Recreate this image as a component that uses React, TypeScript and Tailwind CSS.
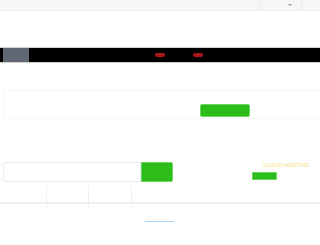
import React from "react";

export default function App() {
  return (
    <div className="w-[320px] h-[245px] bg-white overflow-hidden relative" style={{ fontFamily: '"Liberation Sans", Arial, sans-serif' }}>
      {/* top bar */}
      <div className="h-[11px] bg-[#f6f6f6] border-b border-[#eeeeee] flex justify-end">
        <div className="w-[42px] mr-[18px] border-l border-r border-[#ececec] flex items-center justify-end pr-[9px]">
          <div className="w-0 h-0 border-l-[2px] border-r-[2px] border-t-[2px] border-l-transparent border-r-transparent border-t-[#999]" />
        </div>
      </div>
      {/* black nav */}
      <div className="mt-[36px] h-[16px] bg-black border-t border-b border-[#cfcfcf] flex items-stretch">
        <div className="w-[3px]" />
        <div className="w-[26px] bg-[#5f6775]" />
        <div className="flex-1 flex items-center">
          <div className="ml-[126px] w-[10px] h-[4px] rounded-full bg-[#b01515]" />
          <div className="ml-[28px] w-[10px] h-[4px] rounded-full bg-[#b01515]" />
        </div>
      </div>
      {/* panel */}
      <div className="mt-[27px] ml-[3px] h-[29px] border border-[#f5f5f5] border-r-0 rounded-l-[2px] flex items-end pb-[1px]">
        <div className="ml-[196px] w-[50px] h-[13px] bg-[#2dbd1a] rounded-[2px] border border-[#6ad65c]" />
      </div>
      {/* search row */}
      <div className="mt-[43px] flex items-start relative">
        <div className="ml-[3px] w-[138px] h-[20px] border border-[#ebebeb] rounded-l-[2px] bg-white" />
        <div className="w-[32px] h-[20px] bg-[#2dbd1a] rounded-r-[2px] border border-[#6ad65c]" />
        <div className="ml-[79px] mt-[0px] flex flex-col items-start">
          <div className="ml-[11px] text-[5.6px] leading-[7px] text-[#f5dc72] whitespace-nowrap">CLOUD HOSTING</div>
          <div className="mt-[3px] w-[25px] h-[8px] bg-[#2dbd1a] rounded-[1px] border border-[#6ad65c]" />
        </div>
      </div>
      {/* columns */}
      <div className="mt-[3px] flex h-[23px]">
        <div className="w-[46px]" />
        <div className="w-[42px] border-l border-[#f0f0f0]" />
        <div className="w-[43px] border-l border-[#f0f0f0]" />
        <div className="border-l border-[#f0f0f0]" />
      </div>
      <div className="-mt-[6px] h-[2px] bg-[#f0f0f0]" />
      {/* bottom */}
      <div className="mt-[17px] ml-[145px] w-[29px] h-[1px] bg-[#a9d7f7]" />
    </div>
  );
}
